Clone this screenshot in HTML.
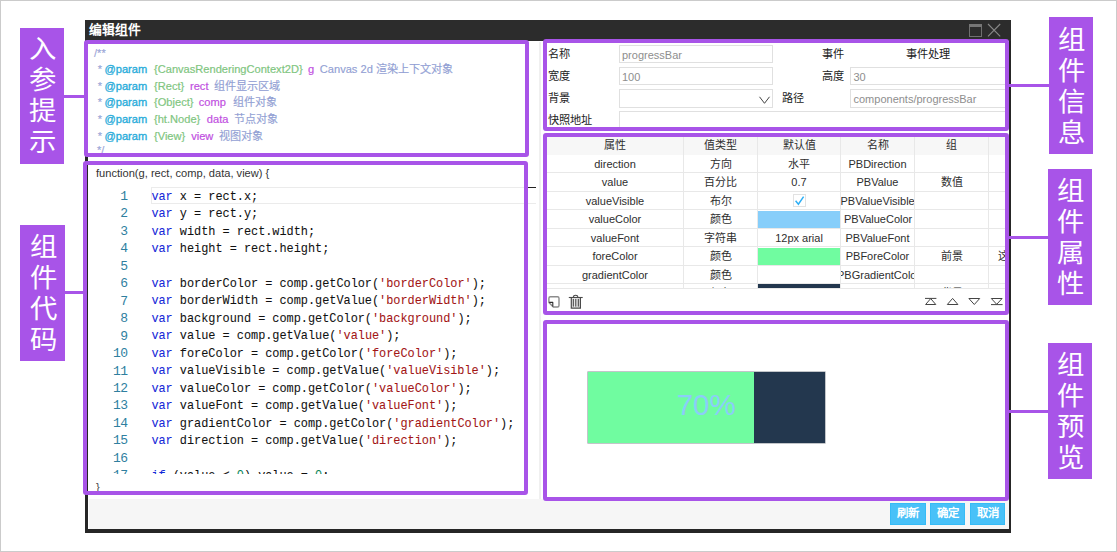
<!DOCTYPE html>
<html lang="zh-CN">
<head>
<meta charset="utf-8">
<title>编辑组件</title>
<style>
html,body{margin:0;padding:0;}
body{width:1117px;height:552px;position:relative;overflow:hidden;background:#fff;
  font-family:"Liberation Sans",sans-serif;font-size:11px;color:#333;}
.abs{position:absolute;}
#frame{position:absolute;left:0;top:0;width:1115px;height:550px;border:1px solid #cbcbcb;}
/* dialog */
#dlg{position:absolute;left:85px;top:20px;width:921px;height:509px;border:3px solid #262626;border-right-width:2px;border-bottom-width:3px;border-top:0;background:#fff;}
#title{position:absolute;left:85px;top:20px;width:926px;height:20.7px;background:#2c2c2c;}
#title .t{position:absolute;left:4px;top:0;height:20.7px;line-height:20.7px;color:#fff;font-weight:bold;font-size:12.8px;white-space:nowrap;}
#footer{position:absolute;left:89px;top:499px;width:920px;height:30px;background:#f6f6f6;}
.btn{position:absolute;top:503px;width:35px;height:21.5px;background:#48c1f8;box-shadow:inset 0 0 0 1px #36bbf6;color:#fff;font-size:11.4px;font-weight:bold;line-height:21px;text-align:center;white-space:nowrap;}
/* purple annotation */
.pb{position:absolute;box-sizing:border-box;border:4px solid #a854e8;border-radius:3px;}
.lab{position:absolute;background:#a854e8;color:#fff;font-size:25.6px;font-weight:300;text-align:center;}
.lab span{position:absolute;left:0;width:100%;height:30px;line-height:30px;text-align:center;transform:scaleX(1.07);}
.con{position:absolute;height:3px;background:#a854e8;}
/* params doc */
.doc{position:absolute;left:94px;white-space:pre;font-size:11.1px;height:16px;line-height:16px;color:#9ba7d8;-webkit-text-stroke:0.15px;}
.doc .k{color:#29acda;-webkit-text-stroke:0.34px;}
.doc .ty{color:#7fc67f;-webkit-text-stroke:0.2px;}
.doc .n{color:#bf50e1;-webkit-text-stroke:0.2px;}
.doc .d{color:#929fd4;}
.doc span{position:absolute;top:0;}
/* code */
#ed{position:absolute;left:89px;top:186.5px;width:447px;height:287px;overflow:hidden;}
.ln{position:absolute;left:0;width:447px;height:17.45px;line-height:17.45px;font-family:"Liberation Mono",monospace;font-size:11.9px;letter-spacing:-0.02px;white-space:pre;color:#111;-webkit-text-stroke:0.06px;}
.ln i{position:absolute;left:0;top:1.5px;width:38.2px;text-align:right;font-style:normal;color:#2f7f9f;font-size:13px;letter-spacing:-0.75px;-webkit-text-stroke:0;}
.ln b{position:absolute;left:62.4px;top:2.2px;font-weight:normal;}
.kw{color:#1428d8;}
.st{color:#a31515;}
.nu{color:#098658;}
/* form */
.fl{position:absolute;height:18px;line-height:18px;color:#222;font-size:11.2px;font-weight:350;white-space:nowrap;}
.inp{position:absolute;box-sizing:border-box;border:1px solid #e0e0e0;background:#fff;height:18.3px;line-height:18px;color:#8e8e8e;font-size:11px;white-space:nowrap;overflow:hidden;}
/* table */
#tb{position:absolute;left:547px;top:137px;width:458px;height:151.5px;overflow:hidden;background:#fff;}
.hl{position:absolute;left:0;width:458px;height:1px;background:#e8e8e8;}
.vl{position:absolute;top:0;width:1px;height:152px;background:#e8e8e8;}
.c{position:absolute;height:18.5px;line-height:18.5px;text-align:center;font-size:11px;font-weight:350;white-space:nowrap;overflow:hidden;color:#2e2e2e;}
</style>
</head>
<body>
<div id="frame"></div>

<!-- dialog -->
<div id="dlg"></div>
<div id="title"><div class="t">编辑组件</div>
  <svg class="abs" style="left:883px;top:3px" width="34" height="15" viewBox="0 0 34 15">
    <rect x="1.5" y="1.5" width="12" height="12" fill="none" stroke="#707070" stroke-width="1"/>
    <rect x="1" y="1" width="13" height="3" fill="#767676"/>
    <path d="M20 1 L32.2 13.3 M32.2 1 L20 13.3" stroke="#888" stroke-width="1.1" fill="none"/>
  </svg>
</div>
<div id="footer"></div>
<div class="abs" style="left:85px;top:529px;width:926px;height:3.6px;background:#262626"></div>
<div class="btn" style="left:890.4px;width:35.4px">刷新</div>
<div class="btn" style="left:930.4px;width:34.6px">确定</div>
<div class="btn" style="left:970px">取消</div>

<!-- vertical splitter -->
<div class="abs" style="left:539px;top:42px;width:2px;height:457px;background:#f0f0f0"></div>

<!-- params doc -->
<div id="docs">
<div class="doc" style="top:45px"><span style="left:0">/**</span></div>
<div class="doc" style="top:60.6px"><span style="left:3.7px">*</span><span class="k" style="left:10.5px">@param</span><span class="ty" style="left:60px">{CanvasRenderingContext2D}</span><span class="n" style="left:214px">g</span><span class="d" style="left:225.8px">Canvas 2d 渲染上下文对象</span></div>
<div class="doc" style="top:78.1px"><span style="left:3.7px">*</span><span class="k" style="left:10.5px">@param</span><span class="ty" style="left:60px">{Rect}</span><span class="n" style="left:96px">rect</span><span class="d" style="left:120.4px">组件显示区域</span></div>
<div class="doc" style="top:94.3px"><span style="left:3.7px">*</span><span class="k" style="left:10.5px">@param</span><span class="ty" style="left:60px">{Object}</span><span class="n" style="left:104.8px">comp</span><span class="d" style="left:138.9px">组件对象</span></div>
<div class="doc" style="top:111.3px"><span style="left:3.7px">*</span><span class="k" style="left:10.5px">@param</span><span class="ty" style="left:60px">{ht.Node}</span><span class="n" style="left:112.8px">data</span><span class="d" style="left:139.6px">节点对象</span></div>
<div class="doc" style="top:127.9px"><span style="left:3.7px">*</span><span class="k" style="left:10.5px">@param</span><span class="ty" style="left:60px">{View}</span><span class="n" style="left:97.2px">view</span><span class="d" style="left:124.8px">视图对象</span></div>
<div class="doc" style="top:142px"><span style="left:3px">*/</span></div>
</div>

<!-- code -->
<div class="abs" style="left:96px;top:165px;height:16px;line-height:16px;font-size:11.1px;color:#333;white-space:pre">function(g, rect, comp, data, view) {</div>
<div id="ed">
  <div class="abs" style="left:62.3px;top:0px;width:390px;height:15.4px;border:1.5px solid #ebebeb"></div>
  <div class="ln" style="top:0px"><i>1</i><b><span class="kw">var</span> x = rect.x;</b></div>
  <div class="ln" style="top:17.45px"><i>2</i><b><span class="kw">var</span> y = rect.y;</b></div>
  <div class="ln" style="top:34.9px"><i>3</i><b><span class="kw">var</span> width = rect.width;</b></div>
  <div class="ln" style="top:52.35px"><i>4</i><b><span class="kw">var</span> height = rect.height;</b></div>
  <div class="ln" style="top:69.8px"><i>5</i><b></b></div>
  <div class="ln" style="top:87.25px"><i>6</i><b><span class="kw">var</span> borderColor = comp.getColor(<span class="st">'borderColor'</span>);</b></div>
  <div class="ln" style="top:104.7px"><i>7</i><b><span class="kw">var</span> borderWidth = comp.getValue(<span class="st">'borderWidth'</span>);</b></div>
  <div class="ln" style="top:122.15px"><i>8</i><b><span class="kw">var</span> background = comp.getColor(<span class="st">'background'</span>);</b></div>
  <div class="ln" style="top:139.6px"><i>9</i><b><span class="kw">var</span> value = comp.getValue(<span class="st">'value'</span>);</b></div>
  <div class="ln" style="top:157.05px"><i>10</i><b><span class="kw">var</span> foreColor = comp.getColor(<span class="st">'foreColor'</span>);</b></div>
  <div class="ln" style="top:174.5px"><i>11</i><b><span class="kw">var</span> valueVisible = comp.getValue(<span class="st">'valueVisible'</span>);</b></div>
  <div class="ln" style="top:191.95px"><i>12</i><b><span class="kw">var</span> valueColor = comp.getColor(<span class="st">'valueColor'</span>);</b></div>
  <div class="ln" style="top:209.4px"><i>13</i><b><span class="kw">var</span> valueFont = comp.getValue(<span class="st">'valueFont'</span>);</b></div>
  <div class="ln" style="top:226.85px"><i>14</i><b><span class="kw">var</span> gradientColor = comp.getColor(<span class="st">'gradientColor'</span>);</b></div>
  <div class="ln" style="top:244.3px"><i>15</i><b><span class="kw">var</span> direction = comp.getValue(<span class="st">'direction'</span>);</b></div>
  <div class="ln" style="top:261.75px"><i>16</i><b></b></div>
  <div class="ln" style="top:279.2px"><i>17</i><b><span class="kw">if</span> (value &lt; <span class="nu">0</span>) value = <span class="nu">0</span>;</b></div>
</div>
<div class="abs" style="left:524px;top:186.5px;width:11.5px;height:1.5px;background:#222"></div>
<div class="abs" style="left:96px;top:478.5px;height:16px;line-height:16px;font-size:11.1px;color:#444;">}</div>

<!-- form -->
<div class="fl" style="left:548px;top:45px">名称</div>
<div class="fl" style="left:548px;top:67px">宽度</div>
<div class="fl" style="left:548px;top:89.2px">背景</div>
<div class="fl" style="left:548px;top:110.5px">快照地址</div>
<div class="inp" style="left:618.5px;top:45px;width:154.5px;padding-left:2.5px">progressBar</div>
<div class="inp" style="left:618.5px;top:67.2px;width:154.5px;padding-left:2.5px">100</div>
<div class="inp" style="left:618.5px;top:89.3px;width:154.5px"></div>
<svg class="abs" style="left:758px;top:95px" width="13" height="10" viewBox="0 0 13 10"><path d="M1.5 1.8 L6.5 8.3 L11.5 1.8" fill="none" stroke="#444" stroke-width="1"/></svg>
<div class="inp" style="left:618.5px;top:111.4px;width:389px"></div>
<div class="fl" style="left:822px;top:45px">事件</div>
<div class="fl" style="left:850px;top:45px;width:156px;text-align:center">事件处理</div>
<div class="fl" style="left:822px;top:67px">高度</div>
<div class="inp" style="left:850px;top:67.2px;width:158px;padding-left:2.5px">30</div>
<div class="fl" style="left:781.5px;top:89.2px">路径</div>
<div class="inp" style="left:850px;top:89.3px;width:158px;padding-left:2.5px">components/progressBar</div>

<!-- table -->
<div id="tb">
  <div class="abs" style="left:0;top:0;width:458px;height:17.5px;background:#f7f7f7"></div>
  <!-- color cells -->
  <div class="abs" style="left:211px;top:74px;width:82px;height:16.5px;background:#87cefa"></div>
  <div class="abs" style="left:211px;top:111px;width:82px;height:16.5px;background:#70fca0"></div>
  <div class="abs" style="left:211px;top:147.3px;width:82px;height:6px;background:#23374e"></div>
  <!-- row lines -->
  <div class="hl" style="top:35px"></div>
  <div class="hl" style="top:53.5px"></div>
  <div class="hl" style="top:72px"></div>
  <div class="hl" style="top:90.5px"></div>
  <div class="hl" style="top:109px"></div>
  <div class="hl" style="top:127.5px"></div>
  <div class="hl" style="top:146px"></div>
  <div class="vl" style="left:136px"></div>
  <div class="vl" style="left:210px"></div>
  <div class="vl" style="left:293px"></div>
  <div class="vl" style="left:367px"></div>
  <div class="vl" style="left:441px"></div>
  <!-- header -->
  <div class="c" style="left:0;top:-1.2px;width:136px">属性</div>
  <div class="c" style="left:137px;top:-1.2px;width:73px">值类型</div>
  <div class="c" style="left:211px;top:-1.2px;width:82px">默认值</div>
  <div class="c" style="left:294px;top:-1.2px;width:73px">名称</div>
  <div class="c" style="left:368px;top:-1.2px;width:73px">组</div>
  <!-- rows -->
  <div class="c" style="left:0;top:17.8px;width:136px">direction</div>
  <div class="c" style="left:137px;top:17.8px;width:73px">方向</div>
  <div class="c" style="left:211px;top:17.8px;width:82px">水平</div>
  <div class="c" style="left:294px;top:17.8px;width:73px">PBDirection</div>

  <div class="c" style="left:0;top:36.4px;width:136px">value</div>
  <div class="c" style="left:137px;top:36.4px;width:73px">百分比</div>
  <div class="c" style="left:211px;top:36.4px;width:82px">0.7</div>
  <div class="c" style="left:294px;top:36.4px;width:73px">PBValue</div>
  <div class="c" style="left:368px;top:36.4px;width:73px">数值</div>

  <div class="c" style="left:0;top:54.8px;width:136px">valueVisible</div>
  <div class="c" style="left:137px;top:54.8px;width:73px">布尔</div>
  <svg class="abs" style="left:246px;top:57px" width="14" height="14" viewBox="0 0 14 14"><rect x="0.5" y="0.5" width="12" height="12" fill="#fff" stroke="#e2e2e2"/><path d="M2.6 6.8 L5.4 10.2 L10.6 2.6" fill="none" stroke="#2eaff5" stroke-width="1.5"/></svg>
  <div class="c" style="left:294px;top:54.8px;width:73px"><span style="position:absolute;left:-0.5px;top:0">PBValueVisible</span></div>

  <div class="c" style="left:0;top:73.4px;width:136px">valueColor</div>
  <div class="c" style="left:137px;top:73.4px;width:73px">颜色</div>
  <div class="c" style="left:294px;top:73.4px;width:73px"><span style="position:absolute;left:3px;top:0">PBValueColor</span></div>

  <div class="c" style="left:0;top:91.7px;width:136px">valueFont</div>
  <div class="c" style="left:137px;top:91.7px;width:73px">字符串</div>
  <div class="c" style="left:211px;top:91.7px;width:82px">12px arial</div>
  <div class="c" style="left:294px;top:91.7px;width:73px">PBValueFont</div>

  <div class="c" style="left:0;top:110.3px;width:136px">foreColor</div>
  <div class="c" style="left:137px;top:110.3px;width:73px">颜色</div>
  <div class="c" style="left:294px;top:110.3px;width:73px">PBForeColor</div>
  <div class="c" style="left:368px;top:110.3px;width:73px">前景</div>
  <div class="c" style="left:442px;top:110.3px;width:16px"><span style="position:absolute;left:9px;top:0">这</span></div>

  <div class="c" style="left:0;top:128.6px;width:136px">gradientColor</div>
  <div class="c" style="left:137px;top:128.6px;width:73px">颜色</div>
  <div class="c" style="left:294px;top:128.6px;width:73px"><span style="position:absolute;left:-4px;top:0">PBGradientColor</span></div>

  <div class="c" style="left:0;top:146.7px;width:136px">background</div>
  <div class="c" style="left:137px;top:146.7px;width:73px">颜色</div>
  <div class="c" style="left:294px;top:146.7px;width:73px">PBBackground</div>
  <div class="c" style="left:368px;top:146.7px;width:73px">背景</div>
</div>
<div class="abs" style="left:547px;top:288px;width:458px;height:1px;background:#e8e8e8"></div>

<!-- toolbar icons -->
<svg class="abs" style="left:547px;top:293px" width="40" height="18" viewBox="0 0 40 18">
  <path d="M3.4 3.7 H10.5 Q12 3.7 12 5.2 V12.5 Q12 14 10.5 14 H6.3 L1.9 9.4 V5.2 Q1.9 3.7 3.4 3.7 Z" fill="none" stroke="#8c8c8c" stroke-width="1.4" stroke-linejoin="round"/>
  <path d="M2.2 9.4 H5.8 V13.4" fill="none" stroke="#2e2e2e" stroke-width="1.1" stroke-linejoin="round"/>
  <g stroke="#4a4a4a" fill="none" stroke-width="1.1">
    <path d="M21.8 4.5 H35.7"/>
    <path d="M26.2 4.3 Q26.4 2.3 28.6 2.3 Q30.8 2.3 31 4.3"/>
    <path d="M24.3 5 V15.2 H33.4 V5" fill="#e6e6e6" stroke-width="1.2"/>
    <path d="M26.3 5.9 V13.6 M28.8 5.9 V13.6 M31.3 5.9 V13.6" stroke="#3a3a3a" stroke-width="1"/>
  </g>
</svg>
<svg class="abs" style="left:920px;top:293px" width="86" height="18" viewBox="0 0 86 18">
  <g stroke="#444" fill="none" stroke-width="1">
    <path d="M5 5.4 H16.4"/><path d="M10.7 5.6 L5.6 11.5 H15.8 Z"/>
    <path d="M32.6 5.4 L27.3 11.5 H37.9 Z"/>
    <path d="M54.3 11.5 L48.9 5.5 H59.7 Z"/>
    <path d="M76.7 11.3 L71.3 5.5 H82.1 Z"/><path d="M71 11.6 H82.6"/>
  </g>
</svg>

<!-- preview -->
<div class="abs" style="left:587.5px;top:372px;width:237.5px;height:71px;background:#23374e;box-shadow:0 0 0 0.6px #9aa0a6"></div>
<div class="abs" style="left:587.5px;top:372px;width:166.5px;height:71px;background:#70fca0"></div>
<div class="abs" style="left:587.5px;top:372px;width:237.5px;height:71px;line-height:66px;text-align:center;font-size:29.6px;color:#8ccdf8">70%</div>

<!-- purple boxes -->
<div class="pb" style="left:84px;top:40px;width:445px;height:117px"></div>
<div class="pb" style="left:83px;top:161px;width:445px;height:334px"></div>
<div class="pb" style="left:543px;top:39px;width:466.3px;height:92px"></div>
<div class="pb" style="left:543px;top:133px;width:466.3px;height:182px"></div>
<div class="pb" style="left:543px;top:320px;width:466.3px;height:181px"></div>

<!-- connectors -->
<div class="con" style="left:64px;top:95px;width:20px"></div>
<div class="con" style="left:65px;top:291px;width:18px"></div>
<div class="con" style="left:1009px;top:84px;width:40px"></div>
<div class="con" style="left:1009px;top:236px;width:39px"></div>
<div class="con" style="left:1009px;top:410px;width:39px"></div>

<!-- labels -->
<div class="lab" style="left:20px;top:28px;width:44px;height:136px"><span style="top:6px;left:1px">入</span><span style="top:37px;left:0.5px">参</span><span style="top:68px;left:1.2px">提</span><span style="top:98.5px;left:0.5px">示</span></div>
<div class="lab" style="left:20px;top:225px;width:45px;height:136px"><span style="top:7px;left:0.5px">组</span><span style="top:38.2px;left:0.5px">件</span><span style="top:69px;left:0.5px">代</span><span style="top:100px;left:0.5px">码</span></div>
<div class="lab" style="left:1049px;top:17px;width:44px;height:137px"><span style="top:7.5px;left:0.5px">组</span><span style="top:39px;left:0.5px">件</span><span style="top:69.5px;left:0.5px">信</span><span style="top:100.5px;left:0.5px">息</span></div>
<div class="lab" style="left:1048px;top:169px;width:44px;height:135.5px"><span style="top:7px;left:1px">组</span><span style="top:38px;left:1px">件</span><span style="top:69px;left:1px">属</span><span style="top:100px;left:1px">性</span></div>
<div class="lab" style="left:1048px;top:343px;width:44px;height:135.5px"><span style="top:7px;left:1px">组</span><span style="top:38.3px;left:1px">件</span><span style="top:68.8px;left:1px">预</span><span style="top:100px;left:1px">览</span></div>

</body>
</html>
